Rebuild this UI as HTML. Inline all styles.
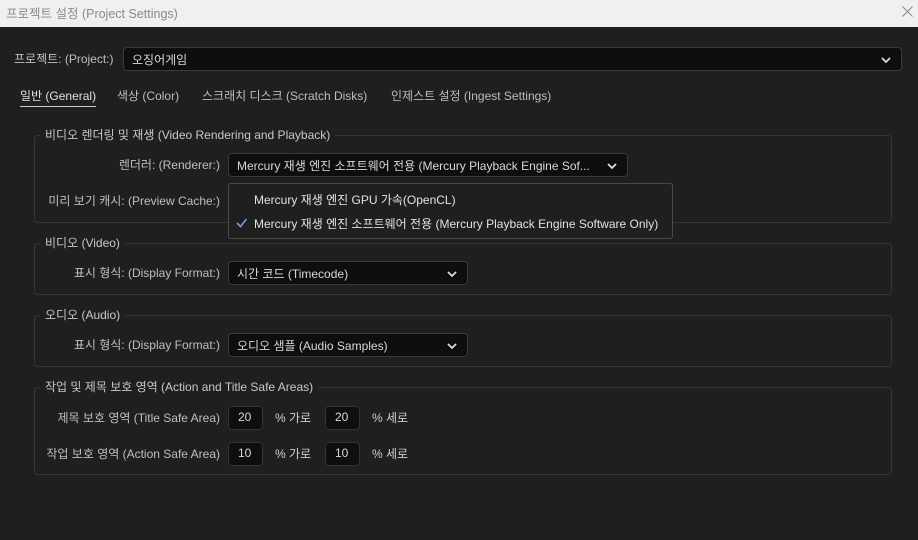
<!DOCTYPE html>
<html><head><meta charset="utf-8"><style>
*{box-sizing:border-box;margin:0;padding:0}
body{width:918px;height:540px;background:#1f1f1f;font-family:"Liberation Sans","Noto Sans CJK KR",sans-serif;font-size:12px;color:#d0d0d0;position:relative;overflow:hidden}
.a{position:absolute;white-space:nowrap}
.t{margin-top:-2px}
.title{left:0;top:0;width:918px;height:27px;background:#f0f0f0;color:#8a8a8a;font-size:12.5px;padding:3px 0 0 6px}
.sel{position:absolute;background:#0e0e0e;border:1px solid #3a3a3a;border-radius:4px;color:#d8d8d8;padding:3px 0 0 8px;white-space:nowrap}
.chev{position:absolute;right:9px;top:8px;width:12px;height:8px}
.box{position:absolute;border:1px solid #363636;border-radius:4px}
.leg{position:absolute;background:#1f1f1f;padding:0 5px;color:#c8c8c8;margin-top:-2px}
.lbl{position:absolute;text-align:right;color:#bfbfbf;white-space:nowrap;margin-top:-2px}
.num{position:absolute;width:35px;height:24px;background:#0e0e0e;border:1px solid #333;border-radius:4px;padding:3px 0 0 9px;color:#d8d8d8}
</style></head><body>
<div class="a title">프로젝트 설정 (Project Settings)</div>
<svg class="a" style="left:902px;top:6px" width="11" height="11"><path d="M0.5 0.5L10.5 10.5M10.5 0.5L0.5 10.5" stroke="#888" stroke-width="1"/></svg>

<div class="lbl" style="left:14px;top:52px">프로젝트: (Project:)</div>
<div class="sel" style="left:123px;top:47px;width:779px;height:24px">오징어게임<svg class="chev" viewBox="0 0 12 8"><path d="M2 2L6 6L10 2" stroke="#ddd" stroke-width="1.8" fill="none"/></svg></div>

<div class="a t" style="left:20px;top:89px;color:#e0e0e0">일반 (General)</div>
<div class="a" style="left:20px;top:106px;width:76px;height:1px;background:#ccc"></div>
<div class="a t" style="left:117px;top:89px;color:#bdbdbd">색상 (Color)</div>
<div class="a t" style="left:202px;top:89px;color:#bdbdbd">스크래치 디스크 (Scratch Disks)</div>
<div class="a t" style="left:391px;top:89px;color:#bdbdbd">인제스트 설정 (Ingest Settings)</div>

<div class="box" style="left:34px;top:135px;width:858px;height:88px"></div>
<div class="leg" style="left:40px;top:128px">비디오 렌더링 및 재생 (Video Rendering and Playback)</div>
<div class="lbl" style="left:0;width:220px;top:158px">렌더러: (Renderer:)</div>
<div class="sel" style="left:228px;top:153px;width:400px;height:24px">Mercury 재생 엔진 소프트웨어 전용 (Mercury Playback Engine Sof...<svg class="chev" viewBox="0 0 12 8"><path d="M2 2L6 6L10 2" stroke="#ddd" stroke-width="1.8" fill="none"/></svg></div>
<div class="lbl" style="left:0;width:220px;top:194px">미리 보기 캐시: (Preview Cache:)</div>

<div class="box" style="left:34px;top:243px;width:858px;height:52px"></div>
<div class="leg" style="left:40px;top:236px">비디오 (Video)</div>
<div class="lbl" style="left:0;width:220px;top:266px">표시 형식: (Display Format:)</div>
<div class="sel" style="left:228px;top:261px;width:240px;height:24px">시간 코드 (Timecode)<svg class="chev" viewBox="0 0 12 8"><path d="M2 2L6 6L10 2" stroke="#ddd" stroke-width="1.8" fill="none"/></svg></div>

<div class="box" style="left:34px;top:315px;width:858px;height:52px"></div>
<div class="leg" style="left:40px;top:308px">오디오 (Audio)</div>
<div class="lbl" style="left:0;width:220px;top:338px">표시 형식: (Display Format:)</div>
<div class="sel" style="left:228px;top:333px;width:240px;height:24px">오디오 샘플 (Audio Samples)<svg class="chev" viewBox="0 0 12 8"><path d="M2 2L6 6L10 2" stroke="#ddd" stroke-width="1.8" fill="none"/></svg></div>

<div class="box" style="left:34px;top:387px;width:858px;height:88px"></div>
<div class="leg" style="left:40px;top:380px">작업 및 제목 보호 영역 (Action and Title Safe Areas)</div>
<div class="lbl" style="left:0;width:220px;top:411px">제목 보호 영역 (Title Safe Area)</div>
<div class="num" style="left:228px;top:406px">20</div>
<div class="a t" style="left:275px;top:411px">% 가로</div>
<div class="num" style="left:325px;top:406px">20</div>
<div class="a t" style="left:372px;top:411px">% 세로</div>
<div class="lbl" style="left:0;width:220px;top:447px">작업 보호 영역 (Action Safe Area)</div>
<div class="num" style="left:228px;top:442px">10</div>
<div class="a t" style="left:275px;top:447px">% 가로</div>
<div class="num" style="left:325px;top:442px">10</div>
<div class="a t" style="left:372px;top:447px">% 세로</div>

<div class="a" style="left:228px;top:183px;width:445px;height:56px;background:#1f1f1f;border:1px solid #4a4a4a;border-radius:3px"></div>
<div class="a t" style="left:254px;top:193px;color:#e2e2e2">Mercury 재생 엔진 GPU 가속(OpenCL)</div>
<svg class="a" style="left:236px;top:218px" width="12" height="10"><path d="M1 5L4.5 8.5L10.5 1" stroke="#6aa0e0" stroke-width="1.6" fill="none"/></svg>
<div class="a t" style="left:254px;top:217px;color:#e2e2e2">Mercury 재생 엔진 소프트웨어 전용 (Mercury Playback Engine Software Only)</div>
</body></html>
